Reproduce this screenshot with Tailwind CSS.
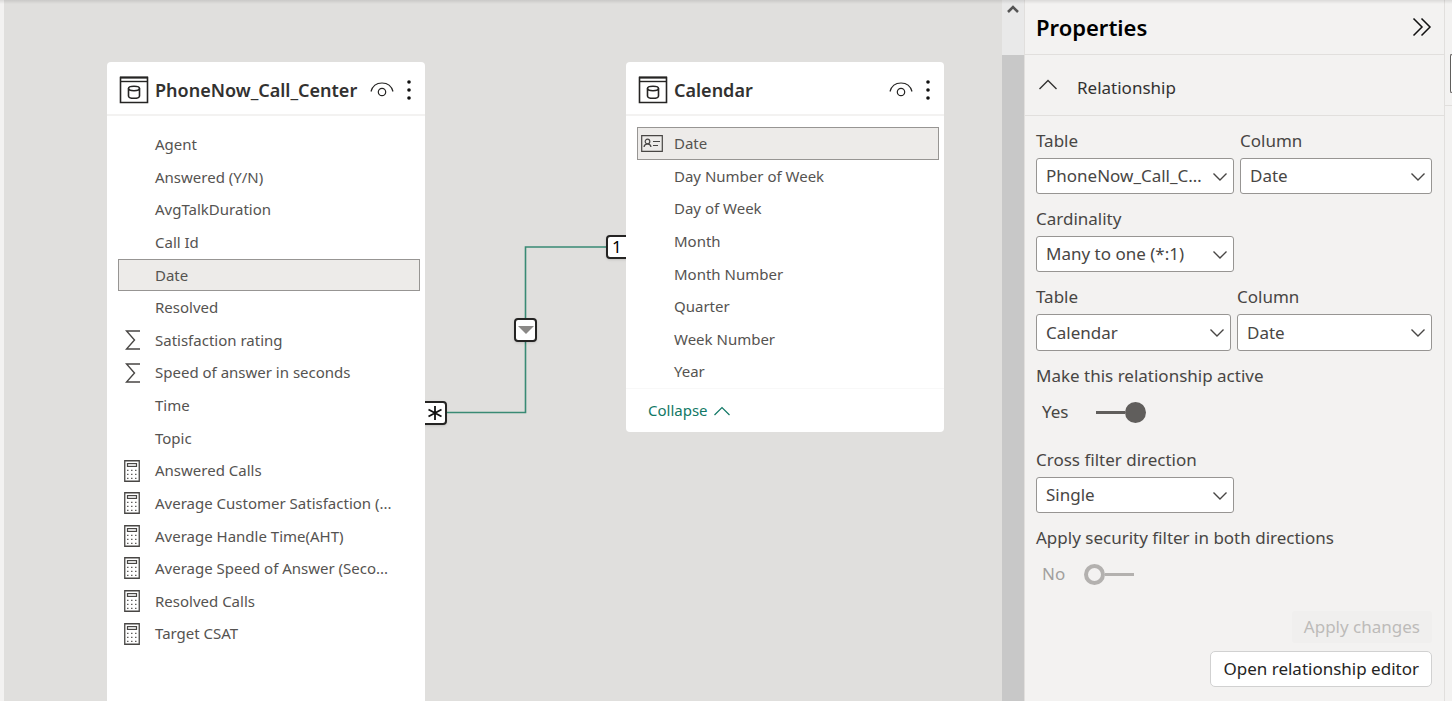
<!DOCTYPE html>
<html lang="en">
<head>
<meta charset="utf-8">
<meta name="viewport" content="width=device-width, initial-scale=1">
<title>Model view</title>
<script src="https://cdn.jsdelivr.net/npm/@tailwindcss/browser@4"></script>
</head>
<body class="relative flex h-screen overflow-hidden bg-[#f3f2f1] font-['Segoe_UI','Noto_Sans',sans-serif] text-[#484644]">

<svg class="hidden" aria-hidden="true">
  <symbol id="table" viewBox="0 0 30 28"><g fill="none" stroke="#252423"><path d="M1.500 1.500h27v25h-27z" stroke-width="1.600"/><path d="M1 1.500h28" stroke-width="2"/><path d="M1 5.500h28" stroke-width="1.400"/><ellipse cx="15" cy="12.500" rx="5.500" ry="2.200" stroke-width="1.600"/><path d="M9.500 12.500V20c0 1.300 2.500 2.300 5.500 2.300s5.500-1 5.500-2.300v-7.500" stroke-width="1.600"/></g></symbol>
  <symbol id="eye" viewBox="0 0 24 16"><g fill="none" stroke="#252423" stroke-width="1.200"><path d="M1 9.500C2.500 4 6.800 1 12 1s9.500 3 11 8.500"/><circle cx="12" cy="10" r="3.700"/></g></symbol>
  <symbol id="dots" viewBox="0 0 6 22"><g fill="#111"><circle cx="3" cy="3" r="1.800"/><circle cx="3" cy="11" r="1.800"/><circle cx="3" cy="19" r="1.800"/></g></symbol>
  <symbol id="sigma" viewBox="0 0 16 20"><path d="M15 1H1.500L9.500 10 1.500 19H15" fill="none" stroke="#484644" stroke-width="1.400"/></symbol>
  <symbol id="calc" viewBox="0 0 16 22"><path d="M.75.75h14.500v20.500H.75z" fill="none" stroke="#484644" stroke-width="1.300"/><path d="M3.500 3.500h9v3h-9z" fill="#ddd" stroke="#484644" stroke-width="1.200"/><path d="M3 10.300h10M3 14.300h10M3 18.300h10" stroke="#605e5c" stroke-width="1.300" stroke-dasharray="1.500 2.500"/></symbol>
  <symbol id="key" viewBox="0 0 22 17"><g fill="none" stroke="#484644" stroke-width="1.200"><path d="M.7.7h20.600v15.600H.7z"/><circle cx="6.500" cy="6.500" r="2.300"/><path d="M3 12c.3-2 1.700-3.200 3.500-3.200S9.700 10 10 12M12 6.500h7M12 10.500h5"/></g></symbol>
  <symbol id="down" viewBox="0 0 16 10"><path d="M1.500 1.500 8 8l6.500-6.500" fill="none" stroke="#484644" stroke-width="1.400"/></symbol>
</svg>

<div class="w-1 shrink-0"></div>

<main class="relative min-w-0 flex-1 bg-[#e0dfdd]" aria-label="Model diagram">
  <svg class="absolute inset-0 size-full" aria-hidden="true">
    <path d="M443 412.500h78.500V247H604" fill="none" stroke="#398a74" stroke-width="1.600"/>
  </svg>
  <span class="absolute left-[414px] top-[401px] flex h-6 w-[29px] items-center justify-end rounded border-2 border-[#252423] bg-white pr-[2px] shadow">
    <svg class="size-4" viewBox="0 0 16 16" role="img" aria-label="Many"><path d="M8 1v14M1.500 4.500l13 7M1.500 11.500l13-7" stroke="#111" stroke-width="1.800"/></svg>
  </span>
  <span class="absolute left-[602px] top-[235px] flex h-6 w-8 items-center rounded border-2 border-[#252423] bg-white pl-1 text-[17px] text-black shadow">1</span>
  <span class="absolute left-[510px] top-[318px] flex h-6 w-[23px] items-center justify-center rounded border-2 border-[#252423] bg-white shadow">
    <svg class="h-2 w-4" viewBox="0 0 16 8" role="img" aria-label="Single direction"><path d="M0 0h16L8 8z" fill="#8a8886"/></svg>
  </span>

  <section class="absolute bottom-0 left-[103px] top-[62px] w-[318px] rounded-t-sm bg-white">
    <header class="flex h-[54px] items-center border-b-2 border-[#f3f2f1] px-[13px] pl-3 pt-1">
      <svg class="h-7 w-[30px] shrink-0"><use href="#table"/></svg>
      <h2 class="ml-[6px] min-w-0 flex-1 whitespace-nowrap text-[18px] font-semibold text-[#323130]">PhoneNow_Call_Center</h2>
      <button aria-label="Hide table"><svg class="h-4 w-6"><use href="#eye"/></svg></button>
      <button class="ml-3" aria-label="More options"><svg class="h-[22px] w-[6px]"><use href="#dots"/></svg></button>
    </header>
    <ul class="mt-3 grid h-[522px] auto-rows-fr pl-[11px] pr-[5px] text-[15px] text-[#555351]">
      <li class="flex items-center pl-[37px]">Agent</li>
      <li class="flex items-center pl-[37px]">Answered (Y/N)</li>
      <li class="flex items-center pl-[37px]">AvgTalkDuration</li>
      <li class="flex items-center pl-[37px]">Call Id</li>
      <li class="flex items-center border border-[#979593] bg-[#edebe9] pl-9">Date</li>
      <li class="flex items-center pl-[37px]">Resolved</li>
      <li class="flex items-center pl-[7px]"><svg class="mr-[14px] h-5 w-4"><use href="#sigma"/></svg>Satisfaction rating</li>
      <li class="flex items-center pl-[7px]"><svg class="mr-[14px] h-5 w-4"><use href="#sigma"/></svg>Speed of answer in seconds</li>
      <li class="flex items-center pl-[37px]">Time</li>
      <li class="flex items-center pl-[37px]">Topic</li>
      <li class="flex items-center pl-[6px]"><svg class="mr-[15px] h-[22px] w-4"><use href="#calc"/></svg>Answered Calls</li>
      <li class="flex items-center pl-[6px]"><svg class="mr-[15px] h-[22px] w-4"><use href="#calc"/></svg>Average Customer Satisfaction (...</li>
      <li class="flex items-center pl-[6px]"><svg class="mr-[15px] h-[22px] w-4"><use href="#calc"/></svg>Average Handle Time(AHT)</li>
      <li class="flex items-center pl-[6px]"><svg class="mr-[15px] h-[22px] w-4"><use href="#calc"/></svg>Average Speed of Answer (Seco...</li>
      <li class="flex items-center pl-[6px]"><svg class="mr-[15px] h-[22px] w-4"><use href="#calc"/></svg>Resolved Calls</li>
      <li class="flex items-center pl-[6px]"><svg class="mr-[15px] h-[22px] w-4"><use href="#calc"/></svg>Target CSAT</li>
    </ul>
  </section>

  <section class="absolute left-[622px] top-[62px] w-[318px] rounded-sm bg-white">
    <header class="flex h-[54px] items-center border-b-2 border-[#f3f2f1] px-[13px] pl-3 pt-1">
      <svg class="h-7 w-[30px] shrink-0"><use href="#table"/></svg>
      <h2 class="ml-[6px] min-w-0 flex-1 whitespace-nowrap text-[18px] font-semibold text-[#323130]">Calendar</h2>
      <button aria-label="Hide table"><svg class="h-4 w-6"><use href="#eye"/></svg></button>
      <button class="ml-3" aria-label="More options"><svg class="h-[22px] w-[6px]"><use href="#dots"/></svg></button>
    </header>
    <ul class="mt-[11px] grid h-[261px] auto-rows-fr pl-[11px] pr-[5px] text-[15px] text-[#555351]">
      <li class="flex items-center border border-[#979593] bg-[#edebe9] pl-[3px]"><svg class="mr-[11px] h-[17px] w-[22px]"><use href="#key"/></svg>Date</li>
      <li class="flex items-center pl-[37px]">Day Number of Week</li>
      <li class="flex items-center pl-[37px]">Day of Week</li>
      <li class="flex items-center pl-[37px]">Month</li>
      <li class="flex items-center pl-[37px]">Month Number</li>
      <li class="flex items-center pl-[37px]">Quarter</li>
      <li class="flex items-center pl-[37px]">Week Number</li>
      <li class="flex items-center pl-[37px]">Year</li>
    </ul>
    <footer class="flex h-11 items-center border-t border-[#f8f8f8] pl-[22px]">
      <button class="flex items-center gap-[6px] text-[15px] text-[#117865]">Collapse
        <svg class="h-[10px] w-4" viewBox="0 0 16 10" aria-hidden="true"><path d="M.5 9 8 1.500 15.500 9" fill="none" stroke="#117865" stroke-width="1.200"/></svg>
      </button>
    </footer>
  </section>
</main>

<div class="flex w-[22px] shrink-0 flex-col bg-[#c8c8c8]">
  <button class="flex h-[55px] justify-center bg-[#e9e9e9] pt-[5px]" aria-label="Scroll up"><svg class="h-2 w-3" viewBox="0 0 12 8"><path d="M1 7 6 2l5 5" fill="none" stroke="#555" stroke-width="2.500"/></svg></button>
</div>

<aside class="w-[421px] shrink-0 border-x border-[#e1dfdd] text-[17px]">
  <header class="flex h-[55px] items-center justify-between border-b border-[#e1dfdd] pl-[11px] pr-3">
    <h1 class="text-[22px] font-semibold text-black">Properties</h1>
    <button aria-label="Collapse pane"><svg class="size-5" viewBox="0 0 20 20"><path d="m1.500 1.500 8.500 8.500-8.500 8.500M9.500 1.500 18 10l-8.500 8.500" fill="none" stroke="#111" stroke-width="1.500"/></svg></button>
  </header>
  <button class="flex h-[61px] w-full items-center gap-5 border-b border-[#e1dfdd] pl-[14px] pt-[6px] text-[#323130]" aria-expanded="true">
    <svg class="mb-2 h-[11px] w-[18px]" viewBox="0 0 18 11" aria-hidden="true"><path d="M.5 10 9 1.500 17.500 10" fill="none" stroke="#323130" stroke-width="1.400"/></svg>Relationship
  </button>
  <form class="flex flex-col pl-[11px] pr-3 pt-[13px] leading-6">
    <div class="mb-[13px] grid grid-cols-[198px_1fr] gap-[6px]">
      <div class="flex min-w-0 flex-col gap-[5px]">
        <label for="t1">Table</label>
        <div class="relative"><select id="t1" class="h-9 w-full appearance-none overflow-hidden text-ellipsis whitespace-nowrap rounded-[3px] border border-[#979593] bg-white pl-[9px] pr-7"><option>PhoneNow_Call_Center</option></select><svg class="pointer-events-none absolute right-[6px] top-[14px] h-[10px] w-4"><use href="#down"/></svg></div>
      </div>
      <div class="flex min-w-0 flex-col gap-[5px]">
        <label for="c1">Column</label>
        <div class="relative"><select id="c1" class="h-9 w-full appearance-none rounded-[3px] border border-[#979593] bg-white pl-[9px] pr-7"><option>Date</option></select><svg class="pointer-events-none absolute right-[6px] top-[14px] h-[10px] w-4"><use href="#down"/></svg></div>
      </div>
    </div>
    <div class="mb-[13px] flex w-[198px] flex-col gap-[5px]">
      <label for="card">Cardinality</label>
      <div class="relative"><select id="card" class="h-9 w-full appearance-none rounded-[3px] border border-[#979593] bg-white pl-[9px] pr-7"><option>Many to one (*:1)</option></select><svg class="pointer-events-none absolute right-[6px] top-[14px] h-[10px] w-4"><use href="#down"/></svg></div>
    </div>
    <div class="mb-[13px] grid grid-cols-2 gap-[6px]">
      <div class="flex min-w-0 flex-col gap-[5px]">
        <label for="t2">Table</label>
        <div class="relative"><select id="t2" class="h-[37px] w-full appearance-none rounded-[3px] border border-[#979593] bg-white pl-[9px] pr-7"><option>Calendar</option></select><svg class="pointer-events-none absolute right-[6px] top-[14px] h-[10px] w-4"><use href="#down"/></svg></div>
      </div>
      <div class="flex min-w-0 flex-col gap-[5px]">
        <label for="c2">Column</label>
        <div class="relative"><select id="c2" class="h-[37px] w-full appearance-none rounded-[3px] border border-[#979593] bg-white pl-[9px] pr-7"><option>Date</option></select><svg class="pointer-events-none absolute right-[6px] top-[14px] h-[10px] w-4"><use href="#down"/></svg></div>
      </div>
    </div>
    <label for="active">Make this relationship active</label>
    <div class="mb-6 mt-3 flex h-6 items-center pl-[6px]">
      <span class="w-[54px]">Yes</span>
      <input id="active" type="checkbox" role="switch" checked class="flex h-[21px] w-[50px] appearance-none items-center before:h-[3px] before:flex-1 before:bg-[#605e5c] after:size-[21px] after:rounded-full after:bg-[#605e5c]">
    </div>
    <div class="mb-[13px] flex w-[198px] flex-col gap-[5px]">
      <label for="cross">Cross filter direction</label>
      <div class="relative"><select id="cross" class="h-9 w-full appearance-none rounded-[3px] border border-[#979593] bg-white pl-[9px] pr-7"><option>Single</option></select><svg class="pointer-events-none absolute right-[6px] top-[14px] h-[10px] w-4"><use href="#down"/></svg></div>
    </div>
    <label for="security">Apply security filter in both directions</label>
    <div class="mb-[25px] mt-3 flex h-6 items-center pl-[6px] text-[#a19f9d]">
      <span class="w-[42px]">No</span>
      <input id="security" type="checkbox" role="switch" disabled class="flex h-[21px] w-[50px] appearance-none items-center before:size-[21px] before:rounded-full before:border-4 before:border-[#b3b1af] after:h-[3px] after:flex-1 after:bg-[#b3b1af]">
    </div>
    <div class="flex flex-col items-end gap-2">
      <button type="button" disabled class="h-8 rounded-[3px] bg-[#f0efee] px-3 text-[#bdbbb9]">Apply changes</button>
      <button type="button" class="h-9 rounded-[5px] border border-[#d1d1d1] bg-white px-3 text-[#252423]">Open relationship editor</button>
    </div>
  </form>
</aside>

<div class="flex w-[7px] shrink-0 flex-col items-end overflow-hidden">
  <div class="mt-[54px] h-[39px] w-[2px] rounded-l-sm border border-r-0 border-[#605e5c] bg-white"></div>
  <div class="mt-3 w-full border-t border-[#e1dfdd]"></div>
</div>

<div class="pointer-events-none absolute inset-x-0 top-0 h-1 bg-linear-to-b from-black/10 to-transparent"></div>
</body>
</html>
